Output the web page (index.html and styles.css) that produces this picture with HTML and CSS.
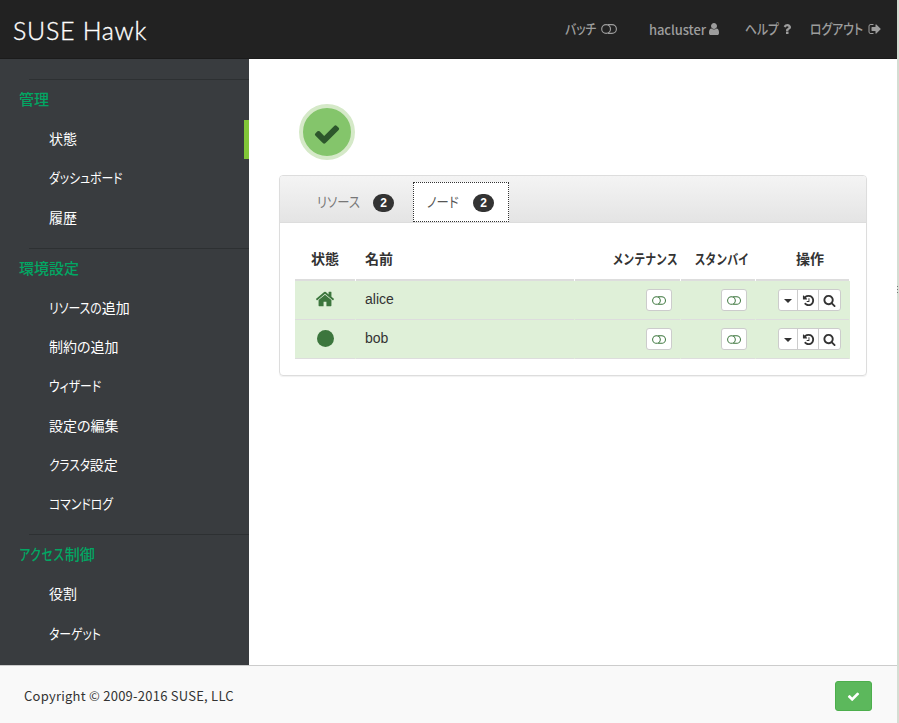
FILE: index.html
```html
<!DOCTYPE html>
<html lang="ja">
<head>
<meta charset="utf-8">
<title>SUSE Hawk</title>
<link rel="stylesheet" href="styles.css">
</head>
<body>
<svg class="defs" width="0" height="0">
  <symbol id="check" viewBox="0 0 1792 1792"><path d="M1671 566q0 40-28 68l-724 724-136 136q-28 28-68 28t-68-28l-136-136-362-362q-28-28-28-68t28-68l136-136q28-28 68-28t68 28l294 295 656-657q28-28 68-28t68 28l136 136q28 28 28 68z"/></symbol>
  <symbol id="user" viewBox="0 0 1792 1792"><path d="M1536 1399q0 109-62.5 187t-150.5 78h-854q-88 0-150.5-78t-62.5-187q0-85 8.5-160.5t31.5-152 58.5-131 94-89 134.5-34.5q131 128 313 128t313-128q76 0 134.5 34.5t94 89 58.5 131 31.5 152 8.5 160.5zm-256-887q0 159-112.5 271.5t-271.5 112.5-271.5-112.5-112.5-271.5 112.5-271.5 271.5-112.5 271.5 112.5 112.5 271.5z"/></symbol>
  <symbol id="question" viewBox="0 0 1792 1792"><path d="M1088 1256v240q0 16-12 28t-28 12h-240q-16 0-28-12t-12-28v-240q0-16 12-28t28-12h240q16 0 28 12t12 28zm316-600q0 54-15.500 101t-35 76.500-55 59.500-57.500 43.500-61 35.500q-41 23-68.500 65t-27.500 67q0 17-12 32.500t-28 15.500h-240q-15 0-25.500-18.500t-10.500-37.500v-45q0-83 65-156.500t143-108.500q59-27 84-56t25-76q0-42-46.500-74t-107.500-32q-65 0-108 29-35 25-107 115-13 16-31 16-12 0-25-8l-164-125q-13-10-15.500-25t5.500-28q160-266 464-266 80 0 161 31t146 83 106 127.500 41 158.500z"/></symbol>
  <symbol id="signout" viewBox="0 0 1792 1792"><path d="M704 1440q0 4 1 20t.5 26.500-3 23.500-10 19.500-20.500 6.500h-320q-119 0-203.500-84.500t-84.500-203.500v-704q0-119 84.500-203.500t203.500-84.500h320q13 0 22.500 9.500t9.500 22.500q0 4 1 20t.5 26.500-3 23.500-10 19.500-20.500 6.500h-320q-66 0-113 47t-47 113v704q0 66 47 113t113 47h312l11.500 1 11.500 3 8 5.500 7 9 2 13.500zm928-544q0 26-19 45l-544 544q-19 19-45 19t-45-19-19-45v-288h-448q-26 0-45-19t-19-45v-384q0-26 19-45t45-19h448v-288q0-26 19-45t45-19 45 19l544 544q19 19 19 45z"/></symbol>
  <symbol id="home" viewBox="0 0 1792 1792"><path d="M1472 992v480q0 26-19 45t-45 19h-384v-384h-256v384h-384q-26 0-45-19t-19-45v-480q0-1 .5-3t.5-3l575-474 575 474q1 2 1 6zm223-69l-62 74q-8 9-21 11h-3q-13 0-21-7l-692-577-692 577q-12 8-24 7-13-2-21-11l-62-74q-8-10-7-23.500t11-21.500l719-599q32-26 76-26t76 26l244 204v-195q0-14 9-23t23-9h192q14 0 23 9t9 23v408l219 182q10 8 11 21.500t-7 23.500z"/></symbol>
  <symbol id="history" viewBox="0 0 1792 1792"><path d="M1664 896q0 156-61 298t-164 245-245 164-298 61q-172 0-327-72.500t-264-204.500q-7-10-6.500-22.500t8.500-20.500l137-138q10-9 25-9 16 2 23 12 73 95 179 147t225 52q104 0 198.500-40.500t163.500-109.500 109.500-163.500 40.500-198.500-40.500-198.500-109.500-163.500-163.500-109.500-198.500-40.500q-98 0-188 35.500t-160 101.500l137 138q31 30 14 69-17 40-59 40h-448q-26 0-45-19t-19-45v-448q0-42 40-59 39-17 69 14l130 129q107-101 244.500-156.500t284.500-55.500q156 0 298 61t245 164 164 245 61 298zm-640-288v448q0 14-9 23t-23 9h-320q-14 0-23-9t-9-23v-64q0-14 9-23t23-9h224v-352q0-14 9-23t23-9h64q14 0 23 9t9 23z"/></symbol>
  <symbol id="search" viewBox="0 0 1792 1792"><path d="M1216 832q0-185-131.500-316.500t-316.500-131.500-316.500 131.500-131.500 316.500 131.500 316.500 316.500 131.500 316.500-131.500 131.500-316.500zm512 832q0 52-38 90t-90 38q-54 0-90-38l-343-342q-179 124-399 124-143 0-273.500-55.500t-225-150-150-225-55.500-273.500 55.500-273.500 150-225 225-150 273.500-55.500 273.500 55.500 225 150 150 225 55.500 273.500q0 220-124 399l343 343q37 37 37 90z"/></symbol>
  <symbol id="toggle" viewBox="0 0 16 10"><g fill="none" stroke="currentColor" stroke-width="1.150"><circle cx="5.100" cy="5" r="4.400"/><path d="M7 .6h4a4.400 4.400 0 0 1 0 8.800H7"/></g></symbol>
</svg>
<div class="page">
  <header class="topbar">
    <a class="brand">SUSE Hawk</a>
    <nav class="topnav">
      <a class="batch"><span class="k">バッチ</span><svg class="toggle"><use href="#toggle"/></svg></a>
      <a class="account"><span>hacluster</span><svg class="icon"><use href="#user"/></svg></a>
      <a class="help"><span class="k">ヘルプ</span><svg class="icon"><use href="#question"/></svg></a>
      <a class="logout"><span class="k">ログアウト</span><svg class="icon"><use href="#signout"/></svg></a>
    </nav>
  </header>
  <div class="body">
    <aside class="sidebar">
      <section class="group">
        <h2>管理</h2>
        <a class="item active"><span>状態</span></a>
        <a class="item"><span class="k">ダッシュボード</span></a>
        <a class="item"><span>履歴</span></a>
      </section>
      <section class="group">
        <h2>環境設定</h2>
        <a class="item"><span class="k five">リソースの</span><span>追加</span></a>
        <a class="item"><span>制約の追加</span></a>
        <a class="item"><span class="k">ウィザード</span></a>
        <a class="item"><span>設定の編集</span></a>
        <a class="item"><span class="k four">クラスタ</span><span>設定</span></a>
        <a class="item"><span class="k">コマンドログ</span></a>
      </section>
      <section class="group">
        <h2><span class="k access">アクセス</span><span>制御</span></h2>
        <a class="item"><span>役割</span></a>
        <a class="item"><span class="k">ターゲット</span></a>
      </section>
    </aside>
    <main class="content">
      <div class="health"><svg><use href="#check"/></svg></div>
      <div class="panel">
        <div class="tabs">
          <a class="tab"><span class="k">リソース</span><b class="badge">2</b></a>
          <a class="tab current"><span class="k">ノード</span><b class="badge">2</b></a>
        </div>
        <div class="table">
          <div class="row head"><div class="c">状態</div><div>名前</div><div class="c"><span class="k maint">メンテナンス</span></div><div class="c"><span class="k standby">スタンバイ</span></div><div class="c ops">操作</div></div>
          <div class="row"><div class="c"><svg class="state"><use href="#home"/></svg></div><div>alice</div><div class="r"><button class="sw"><svg><use href="#toggle"/></svg></button></div><div class="r"><button class="sw"><svg><use href="#toggle"/></svg></button></div><div class="r"><span class="btns"><button><i class="caret"></i></button><button><svg><use href="#history"/></svg></button><button><svg><use href="#search"/></svg></button></span></div></div>
          <div class="row"><div class="c"><i class="dot"></i></div><div>bob</div><div class="r"><button class="sw"><svg><use href="#toggle"/></svg></button></div><div class="r"><button class="sw"><svg><use href="#toggle"/></svg></button></div><div class="r"><span class="btns"><button><i class="caret"></i></button><button><svg><use href="#history"/></svg></button><button><svg><use href="#search"/></svg></button></span></div></div>
        </div>
      </div>
    </main>
  </div>
  <footer class="footer"><span class="copy">Copyright © 2009-2016 SUSE, LLC</span><button class="ok"><svg><use href="#check"/></svg></button></footer>
</div>
<div class="edge"><i></i><i></i><i></i></div>
</body>
</html>
```
FILE: styles.css
```css
* { box-sizing: border-box; }
body { margin: 0; display: flex; width: 899px; height: 723px; overflow: hidden; font: 14px/20px "Noto Sans CJK JP", sans-serif; color: #333; font-feature-settings: "palt"; background: #fff; }
.defs { position: absolute; }
svg { fill: currentColor; display: block; flex: none; }
span { white-space: nowrap; }
button { padding: 0; font: inherit; display: flex; align-items: center; justify-content: center; }
/* condensed kana */
.k { display: inline-block; transform: scaleX(.845); transform-origin: left; }
.page { width: 897px; height: 723px; display: flex; flex-direction: column; }
.edge { width: 2px; background: #d5ddd3; display: flex; flex-direction: column; gap: 2px; padding-top: 286px; }
.edge i { width: 1px; height: 1px; background: #777; }

.topbar { height: 59px; background: #222; border-bottom: 1px solid #1b1b1b; display: flex; align-items: center; flex: none; }
.brand { font: 300 25px/28px Lato, sans-serif; color: #fff; margin-left: 13px; padding-top: 2px; letter-spacing: .7px; -webkit-text-stroke: .35px #fff; }
.topnav { display: flex; margin-left: auto; padding-right: 15px; color: #9d9d9d; font-weight: 500; }
.topnav a { display: flex; align-items: center; }
.topnav span { margin-top: -2px; }
.topnav .icon { width: 14px; height: 14px; }
.topnav .toggle { width: 16px; height: 10px; }
.batch { width: 84px; }
.batch .k { margin-right: -1px; }
.account { width: 96px; gap: 1px; font-size: 13px; }
.topnav .account span { margin-top: 1px; letter-spacing: -.1px; }
.help { width: 65px; }
.help .k { margin-right: -5px; }
.logout { width: 72px; }
.logout .k { margin-right: -5px; }

.body { display: flex; height: 606px; flex: none; }
.sidebar { width: 249px; background: #393c3f; padding-top: 20px; flex: none; }
.group { padding-bottom: 10px; }
.group::before { content: ""; display: block; height: 1px; margin-left: 29px; background: #2d3032; }
.group h2 { margin: 0; padding: 0 0 0 19px; height: 40px; font: 500 15px/38px "Noto Sans CJK JP", sans-serif; color: #02a663; }
.item { display: flex; align-items: center; height: 39.25px; padding: 0 0 3px 49px; color: #fff; }
.item.active { border-right: 5px solid #81c638; }
.five { margin-right: -9.5px; }
.four { transform: scaleX(.83); margin-right: -8.500px; }
.access { transform: scaleX(.77); margin-right: -13.500px; }

.content { flex: 1; padding: 45px 30px 0; }
.health { width: 56px; height: 56px; border: 4px solid #d5e9c8; border-radius: 50%; background: #84c56b; color: #2d572c; display: flex; align-items: center; justify-content: center; margin-left: 20px; }
.health svg { width: 28px; height: 28px; margin-top: 4px; }
.panel { margin-top: 15px; height: 201px; border: 1px solid #ddd; border-radius: 4px; box-shadow: 0 1px 1px rgba(0,0,0,.06); }
.tabs { height: 47px; background: linear-gradient(#f4f4f4, #e4e4e4); border-bottom: 1px solid #ddd; padding: 6px 0 0 22px; display: flex; border-radius: 3px 3px 0 0; color: #777; }
.tab { height: 40px; display: flex; align-items: center; justify-content: space-between; padding: 0 19px 0 15px; width: 111px; }
.tab .k { transform: scaleX(.88); margin-top: -2px; }
.tab.current { width: 96px; background: #fff; border: 1px dotted #333; color: #555; padding: 0 14px 0 13px; }
.badge { width: 21px; height: 18px; border-radius: 9px; background: #333; color: #fff; font: bold 12px/18px "Liberation Sans", sans-serif; text-align: center; margin-top: 2px; }
.table { padding: 15px 16px 0 15px; }
.row { display: grid; grid-template-columns: 61px 219px 106px 75px 94px; height: 39px; font-family: "Liberation Sans", sans-serif; background: #dff0d8; }
.row > div { display: flex; align-items: center; padding: 0 9px 2px; border-bottom: 1px solid #ddd; margin-right: 1px; }
.row.head { height: 43px; background: #fff; font: bold 14px/20px "Noto Sans CJK JP", sans-serif; }
.row.head > div { border-bottom-width: 2px; padding-bottom: 2px; }
.row .c { justify-content: center; padding: 0 0 2px; }
.row > .r { justify-content: flex-end; padding: 0 8px 0 0; }
.row .ops { padding-left: 15px; }
.row.head .c:has(.k) { justify-content: flex-end; }
.maint, .standby { transform: scaleX(.78); transform-origin: right; margin-right: 2px; }
.standby { margin-right: 6px; }
.state { width: 20px; height: 20px; color: #3c763d; }
.dot { width: 17px; height: 17px; border-radius: 50%; background: #3c763d; }
.sw { width: 26px; height: 22px; background: #fff; border: 1px solid #ccc; border-radius: 3px; color: #3c763d; }
.sw svg { width: 14px; height: 9px; }
.btns { display: flex; height: 22px; background: #fff; border: 1px solid #ccc; border-radius: 3px; }
.btns button { border: 0; border-left: 1px solid #ccc; background: none; color: #333; width: 21px; height: 20px; }
.btns button:last-child { width: 22px; }
.btns button:first-child { border: 0; width: 18px; }
.btns svg { width: 13px; height: 13px; }
.caret { border: 4px solid transparent; border-top-color: #333; border-bottom: 0; margin-top: 2px; }

.footer { height: 58px; background: #f9f9f9; border-top: 1px solid #ccc; display: flex; align-items: center; justify-content: space-between; padding: 3px 25px 0 24px; font-size: 13px; }
.copy { letter-spacing: .24px; }
.ok { width: 37px; height: 30px; background: #5cb85c; border: 1px solid #4cae4c; border-radius: 3px; color: #fff; }
.ok svg { width: 13px; height: 13px; }
```
